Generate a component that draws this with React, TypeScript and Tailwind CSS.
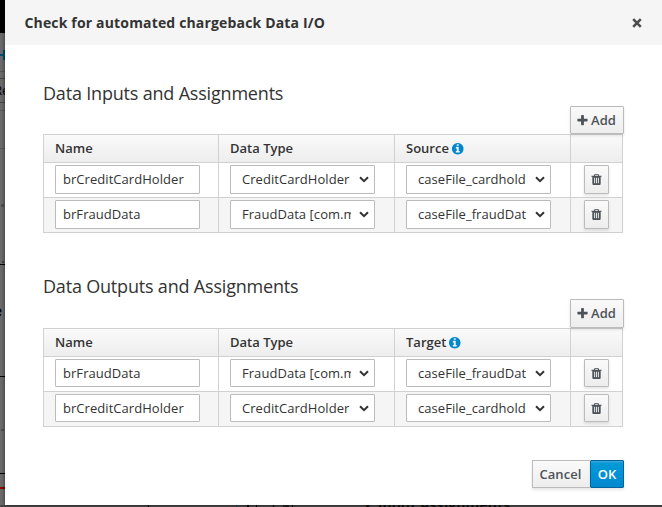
import React from 'react';

const PLUS =
  'M1600 736v192q0 40-28 68t-68 28h-416v416q0 40-28 68t-68 28h-192q-40 0-68-28t-28-68v-416h-416q-40 0-68-28t-28-68v-192q0-40 28-68t68-28h416v-416q0-40 28-68t68-28h192q40 0 68 28t28 68v416h416q40 0 68 28t28 68z';
const TRASH =
  'M704 1376v-704q0-14-9-23t-23-9h-64q-14 0-23 9t-9 23v704q0 14 9 23t23 9h64q14 0 23-9t9-23zm256 0v-704q0-14-9-23t-23-9h-64q-14 0-23 9t-9 23v704q0 14 9 23t23 9h64q14 0 23-9t9-23zm256 0v-704q0-14-9-23t-23-9h-64q-14 0-23 9t-9 23v704q0 14 9 23t23 9h64q14 0 23-9t9-23zm-544-992h448l-48-117q-7-9-17-11h-317q-10 2-17 11zm928 32v64q0 14-9 23t-23 9h-96v948q0 83-47 143.5t-113 60.5h-832q-66 0-113-58.5t-47-141.5v-952h-96q-14 0-23-9t-9-23v-64q0-14 9-23t23-9h309l70-167q15-37 54-63t79-26h320q40 0 79 26t54 63l70 167h309q14 0 23 9t9 23z';
const INFO =
  'M1152 1376v-160q0-14-9-23t-23-9h-96v-512q0-14-9-23t-23-9h-320q-14 0-23 9t-9 23v160q0 14 9 23t23 9h96v320h-96q-14 0-23 9t-9 23v160q0 14 9 23t23 9h448q14 0 23-9t9-23zm-128-896v-160q0-14-9-23t-23-9h-192q-14 0-23 9t-9 23v160q0 14 9 23t23 9h192q14 0 23-9t9-23zm640 416q0 209-103 385.5t-279.5 279.5-385.5 103-385.5-103-279.5-279.5-103-385.5 103-385.5 279.5-279.5 385.5-103 385.5 103 279.5 279.5 103 385.5z';

function Icon({ d, className }: { d: string; className: string }) {
  return (
    <svg viewBox="0 0 1792 1792" fill="currentColor" className={className}>
      <path d={d} />
    </svg>
  );
}

function Select({ value, height }: { value: string; height: string }) {
  return (
    <div className={`flex w-[145px] items-center rounded-[1px] border border-[#bbb] bg-white pl-[11px] ${height}`}>
      <span className="w-[109px] overflow-hidden tracking-[0.05px] whitespace-nowrap">{value}</span>
      <svg viewBox="0 0 10 7" className="ml-[8px] h-[7px] w-[10px]" fill="none" stroke="#333" strokeWidth="2">
        <path d="M1 1.2 5 5.2 9 1.2" />
      </svg>
    </div>
  );
}

type Row = { name: string; type: string; link: string };

const COLUMNS = 'grid grid-cols-[175px_176px_176px_52px]';

function Assignments({
  title,
  linkLabel,
  rows,
  addHeight,
  fieldHeight,
}: {
  title: string;
  linkLabel: string;
  rows: Row[];
  addHeight: string;
  fieldHeight: string;
}) {
  return (
    <section className="w-[580px]">
      <h2 className="h-[25px] text-[18px] leading-[25px] tracking-[-0.19px] whitespace-nowrap">{title}</h2>
      <div className="flex justify-end">
        <button
          className={`relative -mr-px flex w-[54px] items-center justify-center gap-[2px] rounded-[1px] border border-[#bbb] bg-linear-to-b from-[#fafafa] to-[#ededed] pr-[2px] font-semibold text-[#4d5258] shadow-[0_2px_3px_rgba(3,3,3,0.1)] ${addHeight}`}
        >
          <Icon d={PLUS} className="size-[13px]" />
          Add
        </button>
      </div>
      <div className="border-t border-l border-[#d1d1d1]">
        <div
          className={`${COLUMNS} h-[28px] bg-linear-to-b from-[#fafafa] to-[#ededed] leading-[27px] font-semibold`}
        >
          <div className="border-r border-b border-[#d1d1d1] pl-[11px]">Name</div>
          <div className="border-r border-b border-[#d1d1d1] pl-[11px]">Data Type</div>
          <div className="flex items-center gap-[2px] border-r border-b border-[#d1d1d1] pl-[11px]">
            {linkLabel}
            <Icon d={INFO} className="size-[13.5px] text-[#0088ce]" />
          </div>
          <div className="border-r border-b border-[#d1d1d1]" />
        </div>
        {rows.map((row) => (
          <div key={row.name} className={`${COLUMNS} h-[35px] odd:bg-[#f5f5f5] even:bg-white`}>
            <div className="border-r border-b border-[#d1d1d1] pt-[2px] pl-[11px]">
              <div
                className={`flex w-[145px] items-center rounded-[1px] border border-[#bbb] bg-white pl-[7px] tracking-[0.05px] ${fieldHeight}`}
              >
                {row.name}
              </div>
            </div>
            <div className="border-r border-b border-[#d1d1d1] pt-[2px] pl-[11px]">
              <Select value={row.type} height={fieldHeight} />
            </div>
            <div className="border-r border-b border-[#d1d1d1] pt-[2px] pl-[11px]">
              <Select value={row.link} height={fieldHeight} />
            </div>
            <div className="border-r border-b border-[#d1d1d1] pt-[2px] pl-[13px]">
              <button
                className={`flex w-[25px] items-center justify-center rounded-[1px] border border-[#bbb] bg-linear-to-b from-[#fafafa] to-[#ededed] text-[#4d5258] shadow-[0_2px_3px_rgba(3,3,3,0.1)] ${fieldHeight}`}
              >
                <Icon d={TRASH} className="size-[13px]" />
              </button>
            </div>
          </div>
        ))}
      </div>
    </section>
  );
}

/* Left edge of the dimmed editor page that stays visible beside the dialog. */
function EditorEdge() {
  return (
    <div className="flex w-[5px] shrink-0 flex-col overflow-hidden bg-[#6b6b6b] text-[#111]">
      <div className="h-[33px] shrink-0 bg-black" />
      <div className="flex h-[38px] shrink-0 items-center pt-[6px]">
        <div className="h-[2px] w-[3px] bg-[#004a70]" />
        <div className="h-[10px] w-[2px] bg-[#004a70]" />
      </div>
      <div className="h-[7px] shrink-0 border-t border-[#555]" />
      <div className="flex h-[25px] shrink-0 items-center justify-end border-y border-[#444] text-[12px] font-semibold">
        <span className="-mr-[4px]">Re</span>
      </div>
      <div className="mt-[7px] h-[39px] shrink-0 border-y border-[#5a5a5a]" />
      <div className="mt-[55px] ml-px size-[3px] shrink-0 bg-[#505050]" />
      <div className="mt-[54px] ml-[2px] size-[2px] shrink-0 bg-[#444]" />
      <div className="mt-px flex h-[113px] shrink-0 items-start justify-end border-y border-black pt-[36px] text-[14px] font-bold text-black">
        <span className="mr-[3px]">e</span>
      </div>
      <div className="mt-[52px] ml-px h-[2px] w-[3px] shrink-0 bg-[#505050]" />
      <div className="mt-[42px] h-px shrink-0 bg-black" />
      <div className="mt-[13px] h-[2px] shrink-0 bg-[#8b0000]" />
    </div>
  );
}

/* Bottom edge of the dimmed editor page below the dialog. */
function EditorFooter() {
  return (
    <div className="flex h-[2px] shrink-0 overflow-hidden bg-[#494949] text-[#111]">
      <div className="ml-[148px] w-px bg-black" />
      <div className="ml-[87px] w-px bg-[#004a70]" />
      <div className="ml-[10px] w-[2px] bg-black" />
      <div className="ml-[7px] w-px bg-black" />
      <div className="ml-[16px] w-px bg-black" />
      <div className="ml-[9px] w-[6px] bg-[#222]" />
      <div className="ml-[3px] w-px bg-black" />
      <span className="-mt-[10px] ml-[72px] text-[14px] font-bold tracking-[0.1px] whitespace-pre">
        {'•  Input Assignments'}
      </span>
    </div>
  );
}

export default function App() {
  return (
    <div className="flex h-[507px] w-[662px] flex-col overflow-hidden font-['Open_Sans','Noto_Sans',sans-serif] text-[13px] leading-[20px] text-[#333]">
      <div className="flex h-[505px] shrink-0">
        <EditorEdge />
        <div className="relative flex w-[657px] flex-col bg-white shadow-[0_0_4px_rgba(0,0,0,0.6)]">
          <header className="flex h-[45px] shrink-0 items-center justify-between bg-[#f5f5f5] pr-[20px] pl-[19.5px]">
            <h1 className="text-[14px] font-bold tracking-[0.16px]">Check for automated chargeback Data I/O</h1>
            <svg viewBox="0 0 10 10" className="size-[10px]" stroke="#4d4d4d" strokeWidth="2.6">
              <path d="M1.2 1.2 8.8 8.8M8.8 1.2 1.2 8.8" />
            </svg>
          </header>
          <main className="flex flex-col gap-[41px] pt-[36px] pl-[38px]">
            <Assignments
              title="Data Inputs and Assignments"
              linkLabel="Source"
              addHeight="h-[28px]"
              fieldHeight="h-[29px] pb-px"
              rows={[
                { name: 'brCreditCardHolder', type: 'CreditCardHolder', link: 'caseFile_cardhold' },
                { name: 'brFraudData', type: 'FraudData [com.myspace', link: 'caseFile_fraudDat' },
              ]}
            />
            <Assignments
              title="Data Outputs and Assignments"
              linkLabel="Target"
              addHeight="h-[29px] pb-px"
              fieldHeight="h-[28px]"
              rows={[
                { name: 'brFraudData', type: 'FraudData [com.myspace', link: 'caseFile_fraudDat' },
                { name: 'brCreditCardHolder', type: 'CreditCardHolder', link: 'caseFile_cardhold' },
              ]}
            />
          </main>
          <footer className="mt-auto mb-[17px] flex justify-end pr-[38px]">
            <button className="h-[28px] w-[58px] rounded-[1px] border border-r-0 border-[#bbb] bg-linear-to-b from-[#fafafa] to-[#ededed] pr-[2px] font-semibold tracking-[0.1px] text-[#4d5258] shadow-[0_2px_3px_rgba(3,3,3,0.1)]">
              Cancel
            </button>
            <button className="h-[28px] w-[34px] rounded-[1px] border border-[#00659c] bg-linear-to-b from-[#39a5dc] from-0% via-[#0099d8] via-10% to-[#0088ce] font-semibold text-white shadow-[0_2px_3px_rgba(3,3,3,0.1)]">
              OK
            </button>
          </footer>
        </div>
      </div>
      <EditorFooter />
    </div>
  );
}
